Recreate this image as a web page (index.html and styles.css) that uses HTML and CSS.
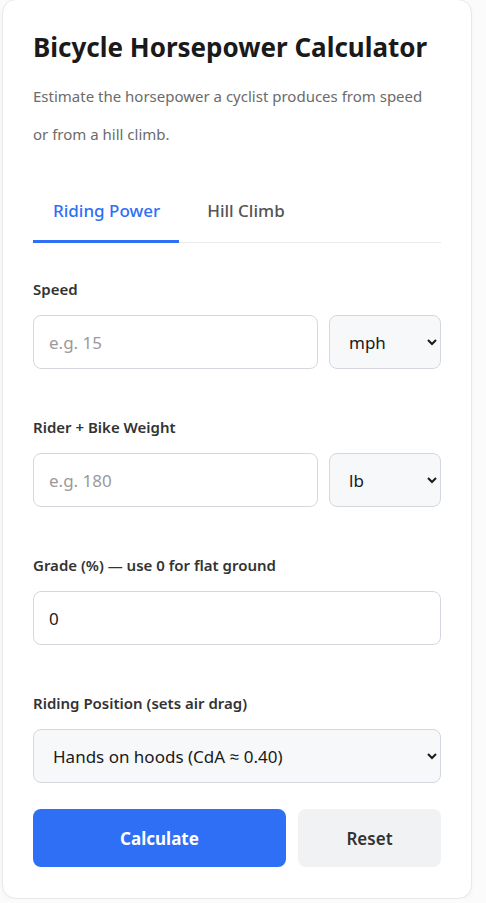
FILE: index.html
```html
<!DOCTYPE html>
<html lang="en">
<head>
    <meta charset="UTF-8">
    <meta name="viewport" content="width=device-width, initial-scale=1.0">
    <title>Bicycle Horsepower Calculator</title>
    <link rel="stylesheet" href="styles.css">
</head>
<body>
    <div class="card">
        <h1>Bicycle Horsepower Calculator</h1>
        <p class="intro">Estimate the horsepower a cyclist produces from speed or from a hill climb.</p>

        <div class="tabs">
            <button class="tab active">Riding Power</button>
            <button class="tab">Hill Climb</button>
        </div>

        <!-- Riding power form -->
        <div class="field">
            <label for="speed">Speed</label>
            <div class="row">
                <input type="number" id="speed" placeholder="e.g. 15">
                <select id="speedUnit">
                    <option>mph</option>
                    <option>km/h</option>
                </select>
            </div>
        </div>

        <div class="field">
            <label for="weight">Rider + Bike Weight</label>
            <div class="row">
                <input type="number" id="weight" placeholder="e.g. 180">
                <select id="weightUnit">
                    <option>lb</option>
                    <option>kg</option>
                </select>
            </div>
        </div>

        <div class="field">
            <label for="grade">Grade (%) — use 0 for flat ground</label>
            <input type="number" id="grade" value="0">
        </div>

        <div class="field last">
            <label for="position">Riding Position (sets air drag)</label>
            <select id="position" class="wide">
                <option>Hands on hoods (CdA ≈ 0.40)</option>
                <option>Upright (CdA ≈ 0.50)</option>
                <option>Drops (CdA ≈ 0.32)</option>
            </select>
        </div>

        <div class="actions">
            <button class="calc-button">Calculate</button>
            <button class="reset-button">Reset</button>
        </div>
    </div>
</body>
</html>
```

FILE: styles.css
```css
body {
  margin: 0;
  background-color: #fbfbfc;
  font-family: "Noto Sans", "Open Sans", sans-serif;
  color: #1a1a1a;
}

.card {
  background-color: #fff;
  width: 408px;
  margin: -1px 0 0 2px;
  padding: 30px 30px 31px 30px;
  border: 1px solid #e6e8eb;
  border-radius: 14px;
  box-shadow: 0 2px 5px rgba(0,0,0,0.03);
}

h1 {
  margin: 0;
  font-size: 26px;
  font-weight: 700;
  line-height: 34px;
}

.intro {
  margin: 13px 0 0 0;
  font-size: 15px;
  line-height: 38px;
  color: #6b6b6b;
}

.tabs {
  display: flex;
  margin-top: 32px;
  border-bottom: 1px solid #e8eaed;
  margin-bottom: 36px;
}

.tab {
  background: none;
  border: none;
  font-family: inherit;
  font-size: 17px;
  font-weight: 500;
  color: #555;
  padding: 14px 19px 18px 20px;
  margin-right: 8px;
  border-bottom: 3px solid transparent;
  margin-bottom: -1px;
  cursor: pointer;
}

.tab.active {
  color: #2f6ff6;
  border-bottom-color: #2f6ff6;
}

.field {
  margin-bottom: 48px;
}

.field.last {
  margin-bottom: 26px;
}

label {
  display: block;
  font-size: 15px;
  font-weight: 600;
  color: #333;
  line-height: 20px;
  margin-bottom: 16px;
}

.row {
  display: flex;
  gap: 11px;
}

input, select {
  box-sizing: border-box;
  height: 54px;
  font-family: inherit;
  font-size: 17px;
  color: #1a1a1a;
  border: 1px solid #d4d8de;
  border-radius: 8px;
  padding: 0 15px;
}

input {
  flex: 1;
  width: 100%;
  background-color: #fff;
}

input::placeholder {
  color: #9a9a9a;
}

select {
  width: 112px;
  background-color: #f7f8fa;
}

select.wide {
  width: 100%;
}

.actions {
  display: flex;
  gap: 12px;
}

.calc-button {
  flex: 1;
  height: 58px;
  border: none;
  border-radius: 8px;
  background-color: #2f6ff6;
  color: #fff;
  font-family: inherit;
  font-size: 17px;
  font-weight: 700;
  cursor: pointer;
}

.reset-button {
  width: 143px;
  height: 58px;
  border: none;
  border-radius: 8px;
  background-color: #f1f2f4;
  color: #333;
  font-family: inherit;
  font-size: 17px;
  font-weight: 600;
  cursor: pointer;
}
```
